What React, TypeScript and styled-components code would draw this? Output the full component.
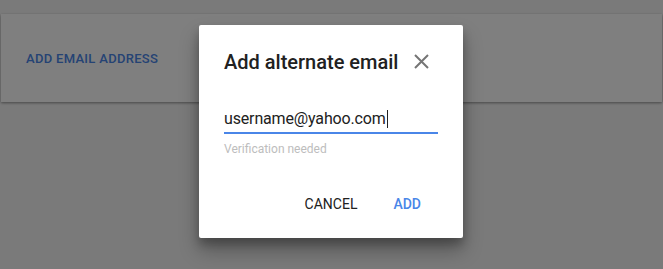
import React from "react";
import styled, { createGlobalStyle } from "styled-components";

const Global = createGlobalStyle`
  html, body { margin: 0; padding: 0; }
  body { background: #f5f5f5; font-family: Roboto, "Noto Sans", Arial, sans-serif; width: 663px; height: 269px; overflow: hidden; }
`;

const Page = styled.div`
  position: relative;
  width: 663px;
  height: 269px;
  padding-top: 14px;
  box-sizing: border-box;
`;

const Card = styled.div`
  margin: 0 1px;
  height: 88px;
  background: #ffffff;
  box-shadow: 0 1px 3px rgba(0, 0, 0, 0.25), 0 1px 2px rgba(0, 0, 0, 0.2);
  display: flex;
  align-items: center;
  padding: 0 25px;
`;

const LinkButton = styled.span`
  font-size: 13px;
  font-weight: 500;
  color: #4a86e8;
  letter-spacing: 0.3px;
  text-transform: uppercase;
`;

const Backdrop = styled.div`
  position: absolute;
  inset: 0;
  background: rgba(0, 0, 0, 0.5);
`;

const Dialog = styled.div`
  position: absolute;
  left: 199px;
  top: 25px;
  width: 264px;
  height: 213px;
  box-sizing: border-box;
  background: #ffffff;
  border-radius: 2px;
  box-shadow: 0 12px 20px rgba(0, 0, 0, 0.3), 0 6px 10px rgba(0, 0, 0, 0.22);
  padding: 24px 25px 0 25px;
  display: flex;
  flex-direction: column;
`;

const Header = styled.div`
  display: flex;
  align-items: center;
  justify-content: space-between;
  height: 26px;
`;

const Title = styled.h2`
  margin: 0;
  font-size: 20px;
  font-weight: 500;
  color: #212121;
`;

const Close = styled.button`
  border: none;
  background: none;
  padding: 0;
  margin-right: 9px;
  margin-top: -1px;
  width: 15px;
  height: 15px;
  display: flex;
  align-items: center;
  justify-content: center;
  cursor: pointer;
`;

const Field = styled.div`
  margin-top: 34px;
  width: 214px;
  border-bottom: 2px solid #4a86e8;
  padding-bottom: 3px;
  font-size: 16px;
  letter-spacing: -0.15px;
  color: #212121;
  line-height: 20px;
  display: flex;
  align-items: center;
`;

const Caret = styled.span`
  display: inline-block;
  width: 1px;
  height: 18px;
  background: #212121;
  margin-left: 1px;
`;

const Hint = styled.div`
  margin-top: 8px;
  font-size: 12px;
  color: #bdbdbd;
`;

const Actions = styled.div`
  margin-top: 40px;
  display: flex;
  justify-content: flex-end;
  gap: 36px;
  padding-right: 17px;
`;

const Action = styled.span<{ $primary?: boolean }>`
  font-size: 14px;
  font-weight: ${(p) => (p.$primary ? 500 : 400)};
  color: ${(p) => (p.$primary ? "#4a86e8" : "#212121")};
`;

export default function App() {
  return (
    <Page>
      <Global />
      <Card>
        <LinkButton>Add email address</LinkButton>
      </Card>
      <Backdrop />
      <Dialog>
        <Header>
          <Title>Add alternate email</Title>
          <Close aria-label="close">
            <svg width="15" height="15" viewBox="0 0 15 15">
              <path d="M1 1 L14 14 M14 1 L1 14" stroke="#757575" strokeWidth="2" fill="none" />
            </svg>
          </Close>
        </Header>
        <Field>
          username@yahoo.com<Caret />
        </Field>
        <Hint>Verification needed</Hint>
        <Actions>
          <Action>CANCEL</Action>
          <Action $primary>ADD</Action>
        </Actions>
      </Dialog>
    </Page>
  );
}
